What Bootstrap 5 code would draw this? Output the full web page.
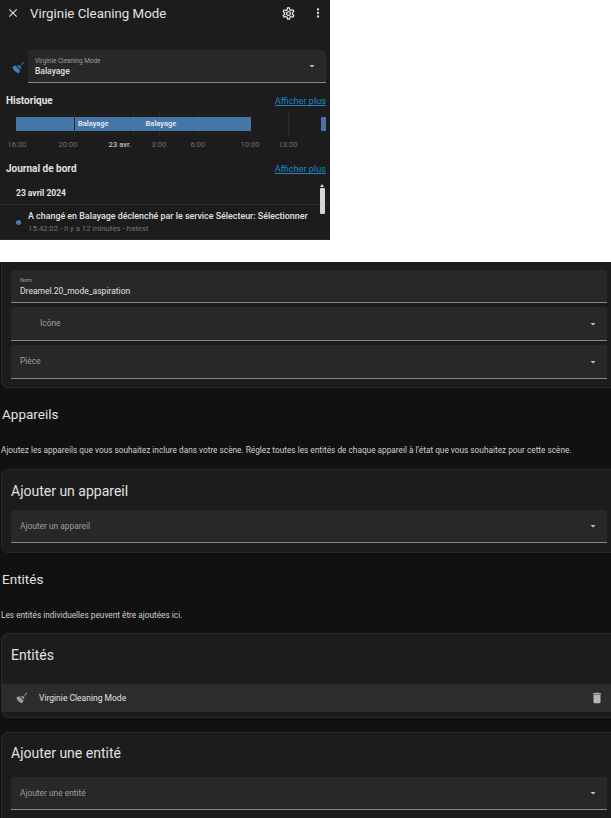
<!DOCTYPE html>
<html lang="fr"><head><meta charset="utf-8"><title>Virginie Cleaning Mode</title>
<link href="https://cdn.jsdelivr.net/npm/bootstrap@5.3.0/dist/css/bootstrap.min.css" rel="stylesheet">
<style>
html,body{height:818px;overflow:hidden;background:#fff}
body{font-family:Roboto,"Liberation Sans",sans-serif;color:#e1e1e1;font-size:8.5px;line-height:1.2}
svg{display:block;fill:currentColor;flex:none}
.dlg{width:330px;height:240px;background:#1c1c1c;overflow:hidden}
.dlg-head{height:26px;padding:0 5px 0 6px}
.dlg-title{font-size:13.3px;margin-left:10px;margin-top:1px}
.ic-w{color:#e1e1e1}
.gear{margin-left:auto}
.dots{margin-left:15px}
.dlg-sel{margin:24px 4px 0 8px;height:33px}
.sel-ic{width:20px;color:#3e7fb8;padding-top:1px}
.field{background:#282828;border-bottom:1px solid #8a8a8a;border-radius:3px 3px 0 0;padding:0 8px 0 9px;color:#9e9e9e;font-size:8.4px}
.field .caret{color:#c4c4c4;margin-left:auto}
.sel-box{padding-left:7px}
.sel-txt{padding-top:2px}
.fl-label{font-size:6.4px;color:#9e9e9e}
.fl-val{font-size:8.5px;color:#e1e1e1;font-weight:500}
.sect{padding:0 4px 0 6px;height:12px}
.sect-t{font-size:10px;font-weight:700;color:#e1e1e1}
.more{font-size:9.2px;color:#1a86c4;text-decoration:underline}
.s1{margin-top:12px}
.s2{margin-top:11px}
.chart{position:relative;height:29px;margin:3px 4px 0 16px}
.bars{padding-top:7px;height:21px}
.grid-l{position:absolute;top:0;height:26px;width:1px;background:#2a2a2a}
.bar{background:#4676a8;height:14px;color:#e8eef5;font-size:7.5px;font-weight:500;line-height:13px;padding-left:3px}
.bar2{width:176px;margin-left:1px}
.bar3{width:5px;padding:0;margin-left:70px}
.bar-gap{margin-left:37px}
.ticks{position:relative;height:12px;margin:1px 4px 0 16px;color:#6f6f6f;font-size:7.7px}
.ticks span{position:absolute;transform:translateX(-50%)}
.ticks .cur{color:#bdbdbd;font-weight:500}
.logb{position:relative;margin-top:7px;height:57px}
.day{padding:0 16px;height:23px;font-size:8.5px;font-weight:700;line-height:13px;border-bottom:1px solid #2a2a2a}
.ent{padding:5px 16px;height:35px;border-bottom:1px solid #2a2a2a}
.dot{width:5px;height:5px;border-radius:50%;background:#3e7fb8;flex:none;margin:0 7px 0 0}
.ent-t{font-size:8.9px;font-weight:500;color:#e1e1e1;white-space:nowrap;margin-bottom:2px}
.ent-s{font-size:7.8px;color:#757575}
.sbar{position:absolute;left:320px;top:6px;width:5px;height:26px;background:#d6d6d6;border-radius:1px}
.sbar::before{content:"";position:absolute;left:0;top:-4px;border:solid transparent;border-width:0 2.5px 3px;border-bottom-color:#d6d6d6}
.pnl{margin-top:22px;height:556px;background:#111;overflow:hidden;padding-left:1px}
.hcard{background:#1c1c1c;border:1px solid #2a2a2a;border-radius:7px;margin-right:-8px;padding:0 11px 0 9px;overflow:hidden}
.c1{height:126px;border-top:0;border-radius:0 0 7px 7px;padding-top:8px}
.f1{height:33px}
.f1 .sel-txt{padding-top:1px}
.f2{height:34px;margin-top:4px}
.nam{font-size:5.5px;margin-bottom:2px}
.f1 .fl-val{font-weight:400}
.h-t{font-size:14px;font-weight:400;color:#e1e1e1;margin:0;padding:0;line-height:17px}
.sec-h{font-size:13.5px;color:#e1e1e1;font-weight:400;margin:18px 0 0 1px;line-height:16px}
.sec-d{font-size:8.27px;color:#d0d0d0;margin:23px 0 0 0;line-height:10px;white-space:nowrap}
.ico-in{margin-left:20px}
.c2{height:84px;margin-top:14px;padding-top:13px}
.f3{height:33px;margin-top:10px}
.c3{height:85px;margin-top:13px;padding:13px 0 0 0}
.c3 .h-t{margin-left:9px}
.rw{height:28px;margin-top:20px;background:#2c2c2c;padding:0 14px 0 13px;color:#9a9a9a}
.rw-t{margin-left:10px;font-size:8.5px;color:#e1e1e1}
.trash{color:#b5b5b5;margin-left:auto}
.c4{height:120px;margin-top:14px;padding-top:12px}
.c4 .f3{margin-top:15px}
</style></head>
<body class="m-0">
<div class="dlg">
 <div class="dlg-head d-flex align-items-center">
  <svg class="ic-w" width="14" height="14" viewBox="0 0 24 24"><path d="M19,6.41L17.59,5L12,10.59L6.41,5L5,6.41L10.59,12L5,17.59L6.41,19L12,13.41L17.59,19L19,17.59L13.41,12L19,6.41Z"/></svg>
  <div class="dlg-title">Virginie Cleaning Mode</div>
  <svg class="ic-w gear" width="15" height="15" viewBox="0 0 24 24"><path d="M12,8A4,4 0 0,1 16,12A4,4 0 0,1 12,16A4,4 0 0,1 8,12A4,4 0 0,1 12,8M12,10A2,2 0 0,0 10,12A2,2 0 0,0 12,14A2,2 0 0,0 14,12A2,2 0 0,0 12,10M10,22C9.75,22 9.54,21.82 9.5,21.58L9.13,18.93C8.5,18.68 7.96,18.34 7.44,17.94L4.95,18.95C4.73,19.03 4.46,18.95 4.34,18.73L2.34,15.27C2.21,15.05 2.27,14.78 2.46,14.63L4.57,12.97L4.5,12L4.57,11L2.46,9.37C2.27,9.22 2.21,8.95 2.34,8.73L4.34,5.27C4.46,5.05 4.73,4.96 4.95,5.05L7.44,6.05C7.96,5.66 8.5,5.32 9.13,5.07L9.5,2.42C9.54,2.18 9.75,2 10,2H14C14.25,2 14.46,2.18 14.5,2.42L14.87,5.07C15.5,5.32 16.04,5.66 16.56,6.05L19.05,5.05C19.27,4.96 19.54,5.05 19.66,5.27L21.66,8.73C21.79,8.95 21.73,9.22 21.54,9.37L19.43,11L19.5,12L19.43,13L21.54,14.63C21.73,14.78 21.79,15.05 21.66,15.27L19.66,18.73C19.54,18.95 19.27,19.04 19.05,18.95L16.56,17.95C16.04,18.34 15.5,18.68 14.87,18.93L14.5,21.58C14.46,21.82 14.25,22 14,22H10M11.25,4L10.88,6.61C9.68,6.86 8.62,7.5 7.85,8.39L5.44,7.35L4.69,8.65L6.8,10.2C6.4,11.37 6.4,12.64 6.8,13.8L4.68,15.36L5.43,16.66L7.86,15.62C8.63,16.5 9.68,17.14 10.87,17.38L11.24,20H12.76L13.13,17.39C14.32,17.14 15.37,16.5 16.14,15.62L18.57,16.66L19.32,15.36L17.2,13.81C17.6,12.64 17.6,11.37 17.2,10.2L19.31,8.65L18.56,7.35L16.15,8.39C15.38,7.5 14.32,6.86 13.12,6.62L12.75,4H11.25Z"/></svg>
  <svg class="ic-w dots" width="14" height="14" viewBox="0 0 24 24"><path d="M12,16A2,2 0 0,1 14,18A2,2 0 0,1 12,20A2,2 0 0,1 10,18A2,2 0 0,1 12,16M12,10A2,2 0 0,1 14,12A2,2 0 0,1 12,14A2,2 0 0,1 10,12A2,2 0 0,1 12,10M12,4A2,2 0 0,1 14,6A2,2 0 0,1 12,8A2,2 0 0,1 10,6A2,2 0 0,1 12,4Z"/></svg>
 </div>
 <div class="dlg-sel d-flex align-items-center">
  <div class="sel-ic d-flex justify-content-center"><svg width="15" height="15" viewBox="0 0 24 24"><path d="M19.36,2.72L20.78,4.14L15.06,9.85C16.13,11.39 16.29,13.24 15.5,14.73L9.77,9C11.26,8.21 13.11,8.37 14.65,9.44L19.36,2.72M5.93,17.57C3.92,15.56 2.69,13.16 2.35,10.92L7.23,8.83L14.67,16.27L12.58,21.15C10.34,20.81 7.94,19.58 5.93,17.57Z"/></svg></div>
  <div class="field sel-box flex-grow-1 h-100 d-flex align-items-center">
   <div class="sel-txt"><div class="fl-label">Virginie Cleaning Mode</div><div class="fl-val">Balayage</div></div>
   <svg class="caret" width="12" height="12" viewBox="0 0 24 24"><path d="M7,10L12,15L17,10H7Z"/></svg>
  </div>
 </div>
 <div class="sect s1 d-flex justify-content-between align-items-center"><span class="sect-t">Historique</span><span class="more">Afficher plus</span></div>
 <div class="chart">
  <span class="grid-l" style="left:58px"></span><span class="grid-l" style="left:117px"></span><span class="grid-l" style="left:143px"></span><span class="grid-l" style="left:182px"></span><span class="grid-l" style="left:234px"></span><span class="grid-l" style="left:272px"></span>
  <div class="bars d-flex position-relative">
   <div class="bar" style="width:58px"></div>
   <div class="bar bar2 d-flex"><span>Balayage</span><span class="bar-gap">Balayage</span></div>
   <div class="bar bar3"></div>
  </div>
 </div>
 <div class="ticks">
  <span style="left:1px">16:00</span><span style="left:52px">20:00</span><span class="cur" style="left:104px">23 avr.</span><span style="left:143px">3:00</span><span style="left:182px">6:00</span><span style="left:234px">10:00</span><span style="left:272px">13:00</span>
 </div>
 <div class="sect s2 d-flex justify-content-between align-items-center"><span class="sect-t">Journal de bord</span><span class="more">Afficher plus</span></div>
 <div class="logb">
  <div class="day d-flex align-items-center">23 avril 2024</div>
  <div class="ent d-flex align-items-center"><span class="dot"></span><div><div class="ent-t">A changé en Balayage déclenché par le service Sélecteur: Sélectionner</div><div class="ent-s">15:42:02 - Il y a 12 minutes - hatest</div></div></div>
  <div class="sbar"></div>
 </div>
</div>
<div class="pnl">
 <div class="hcard c1">
  <div class="field f1 d-flex align-items-center"><div class="sel-txt"><div class="fl-label nam">Nom</div><div class="fl-val">Dreamel.20_mode_aspiration</div></div></div>
  <div class="field f2 d-flex align-items-center"><span class="ico-in">Icône</span><svg class="caret" width="12" height="12" viewBox="0 0 24 24"><path d="M7,10L12,15L17,10H7Z"/></svg></div>
  <div class="field f2 d-flex align-items-center"><span>Pièce</span><svg class="caret" width="12" height="12" viewBox="0 0 24 24"><path d="M7,10L12,15L17,10H7Z"/></svg></div>
 </div>
 <h2 class="sec-h">Appareils</h2>
 <p class="sec-d">Ajoutez les appareils que vous souhaitez inclure dans votre scène. Réglez toutes les entités de chaque appareil à l'état que vous souhaitez pour cette scène.</p>
 <div class="hcard c2"><h3 class="h-t">Ajouter un appareil</h3><div class="field f3 d-flex align-items-center"><span>Ajouter un appareil</span><svg class="caret" width="12" height="12" viewBox="0 0 24 24"><path d="M7,10L12,15L17,10H7Z"/></svg></div></div>
 <h2 class="sec-h">Entités</h2>
 <p class="sec-d">Les entités individuelles peuvent être ajoutées ici.</p>
 <div class="hcard c3"><h3 class="h-t">Entités</h3>
  <div class="rw d-flex align-items-center">
   <svg width="14" height="14" viewBox="0 0 24 24"><path d="M19.36,2.72L20.78,4.14L15.06,9.85C16.13,11.39 16.29,13.24 15.5,14.73L9.77,9C11.26,8.21 13.11,8.37 14.65,9.44L19.36,2.72M5.93,17.57C3.92,15.56 2.69,13.16 2.35,10.92L7.23,8.83L14.67,16.27L12.58,21.15C10.34,20.81 7.94,19.58 5.93,17.57Z"/></svg>
   <span class="rw-t">Virginie Cleaning Mode</span>
   <svg class="trash" width="14" height="14" viewBox="0 0 24 24"><path d="M19,4H15.5L14.5,3H9.5L8.5,4H5V6H19M6,19A2,2 0 0,0 8,21H16A2,2 0 0,0 18,19V7H6V19Z"/></svg>
  </div>
 </div>
 <div class="hcard c4"><h3 class="h-t">Ajouter une entité</h3><div class="field f3 d-flex align-items-center"><span>Ajouter une entité</span><svg class="caret" width="12" height="12" viewBox="0 0 24 24"><path d="M7,10L12,15L17,10H7Z"/></svg></div></div>
</div>
</body></html>
